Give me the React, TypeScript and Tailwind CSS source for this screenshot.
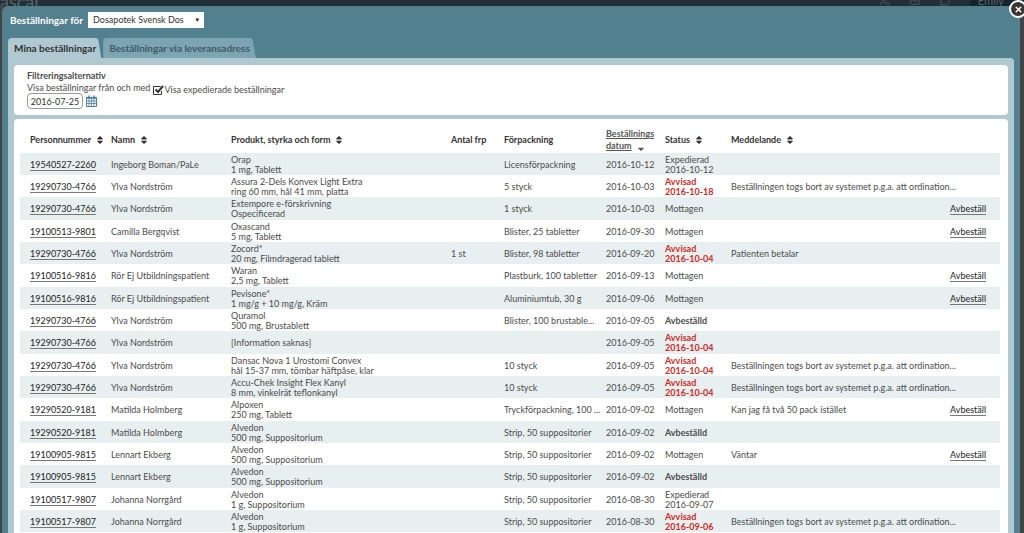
import { FaSort, FaSortDown } from "react-icons/fa";
import { Users, Mail, MessageCircle, X } from "lucide-react";

type Order = {
  pnr: string;
  name: string;
  product: string[];
  count?: string;
  pack?: string;
  date: string;
  status: string;
  statusDate?: string;
  message?: string;
  cancel?: boolean;
};

const REMOVED = "Beställningen togs bort av systemet p.g.a. att ordination...";

const orders: Order[] = [
  { pnr: "19540527-2260", name: "Ingeborg Boman/PaLe", product: ["Orap", "1 mg, Tablett"], pack: "Licensförpackning", date: "2016-10-12", status: "Expedierad", statusDate: "2016-10-12" },
  { pnr: "19290730-4766", name: "Ylva Nordström", product: ["Assura 2-Dels Konvex Light Extra", "ring 60 mm, hål 41 mm, platta"], pack: "5 styck", date: "2016-10-03", status: "Avvisad", statusDate: "2016-10-18", message: REMOVED },
  { pnr: "19290730-4766", name: "Ylva Nordström", product: ["Extempore e-förskrivning", "Ospecificerad"], pack: "1 styck", date: "2016-10-03", status: "Mottagen", cancel: true },
  { pnr: "19100513-9801", name: "Camilla Bergqvist", product: ["Oxascand", "5 mg, Tablett"], pack: "Blister, 25 tabletter", date: "2016-09-30", status: "Mottagen", cancel: true },
  { pnr: "19290730-4766", name: "Ylva Nordström", product: ["Zocord*", "20 mg, Filmdragerad tablett"], count: "1 st", pack: "Blister, 98 tabletter", date: "2016-09-20", status: "Avvisad", statusDate: "2016-10-04", message: "Patienten betalar" },
  { pnr: "19100516-9816", name: "Rör Ej Utbildningspatient", product: ["Waran", "2,5 mg, Tablett"], pack: "Plastburk, 100 tabletter", date: "2016-09-13", status: "Mottagen", cancel: true },
  { pnr: "19100516-9816", name: "Rör Ej Utbildningspatient", product: ["Pevisone*", "1 mg/g + 10 mg/g, Kräm"], pack: "Aluminiumtub, 30 g", date: "2016-09-06", status: "Mottagen", cancel: true },
  { pnr: "19290730-4766", name: "Ylva Nordström", product: ["Quramol", "500 mg, Brustablett"], pack: "Blister, 100 brustable...", date: "2016-09-05", status: "Avbeställd" },
  { pnr: "19290730-4766", name: "Ylva Nordström", product: ["[Information saknas]"], date: "2016-09-05", status: "Avvisad", statusDate: "2016-10-04" },
  { pnr: "19290730-4766", name: "Ylva Nordström", product: ["Dansac Nova 1 Urostomi Convex", "hål 15-37 mm, tömbar häftpåse, klar"], pack: "10 styck", date: "2016-09-05", status: "Avvisad", statusDate: "2016-10-04", message: REMOVED },
  { pnr: "19290730-4766", name: "Ylva Nordström", product: ["Accu-Chek Insight Flex Kanyl", "8 mm, vinkelrät teflonkanyl"], pack: "10 styck", date: "2016-09-05", status: "Avvisad", statusDate: "2016-10-04", message: REMOVED },
  { pnr: "19290520-9181", name: "Matilda Holmberg", product: ["Alpoxen", "250 mg, Tablett"], pack: "Tryckförpackning, 100 ...", date: "2016-09-02", status: "Mottagen", message: "Kan jag få två 50 pack istället", cancel: true },
  { pnr: "19290520-9181", name: "Matilda Holmberg", product: ["Alvedon", "500 mg, Suppositorium"], pack: "Strip, 50 suppositorier", date: "2016-09-02", status: "Avbeställd" },
  { pnr: "19100905-9815", name: "Lennart Ekberg", product: ["Alvedon", "500 mg, Suppositorium"], pack: "Strip, 50 suppositorier", date: "2016-09-02", status: "Mottagen", message: "Väntar", cancel: true },
  { pnr: "19100905-9815", name: "Lennart Ekberg", product: ["Alvedon", "500 mg, Suppositorium"], pack: "Strip, 50 suppositorier", date: "2016-09-02", status: "Avbeställd" },
  { pnr: "19100517-9807", name: "Johanna Norrgård", product: ["Alvedon", "1 g, Suppositorium"], pack: "Strip, 50 suppositorier", date: "2016-08-30", status: "Expedierad", statusDate: "2016-09-07" },
  { pnr: "19100517-9807", name: "Johanna Norrgård", product: ["Alvedon", "1 g, Suppositorium"], pack: "Strip, 50 suppositorier", date: "2016-08-30", status: "Avvisad", statusDate: "2016-09-06", message: REMOVED },
];

const statusStyle: Record<string, string> = {
  Avvisad: "font-bold text-[#cf2a27]",
  Avbeställd: "font-bold",
};

function SortHeader({ label }: { label: string }) {
  return (
    <th className="pt-1 pl-[10px]">
      <button className="flex items-center gap-1 whitespace-nowrap font-bold">
        {label}
        <FaSort className="size-[10px]" />
      </button>
    </th>
  );
}

function CalendarIcon() {
  return (
    <svg viewBox="0 0 11 12" className="h-3 w-[11px]" fill="none" stroke="#4a7ba0">
      <path d="M.5 2.5h10v9H.5z" fill="#fff" />
      <path d="M.5 3.5h10M.5 6h10M.5 8.5h10M3 4v7.5M5.5 4v7.5M8 4v7.5" strokeWidth=".8" />
      <path d="M3 .5v2.5M8 .5v2.5" strokeWidth="1.4" />
    </svg>
  );
}

function OrderRow({ order }: { order: Order }) {
  return (
    <tr className="h-[22px] odd:bg-[#e7eff0] nth-[3n]:h-[23px] [&>td]:pt-px [&>td]:pl-[10px]">
      <td>
        <a href="#" className="border-b border-[#777] text-[#222]">{order.pnr}</a>
      </td>
      <td>{order.name}</td>
      <td>
        {order.product.map((line) => (
          <div key={line}>{line}</div>
        ))}
      </td>
      <td>{order.count}</td>
      <td>{order.pack}</td>
      <td>{order.date}</td>
      <td className={statusStyle[order.status]}>
        <div>{order.status}</div>
        {order.statusDate && <div>{order.statusDate}</div>}
      </td>
      <td>{order.message}</td>
      <td>
        {order.cancel && <a href="#" className="border-b border-[#777] text-[#222]">Avbeställ</a>}
      </td>
    </tr>
  );
}

export default function App() {
  return (
    <div className="relative flex h-screen flex-col overflow-hidden bg-[#444] pr-1 pl-[2px] font-['Lato',sans-serif] text-[9px] leading-[10px] whitespace-nowrap text-[#4c4c4c]">
      {/* Sidhuvudet bakom dialogen */}
      <header className="-mr-1 -ml-[2px] flex h-[6px] shrink-0 items-end justify-between overflow-hidden bg-[#222f36] text-[#56636a]">
        <span className="text-[18px] leading-[10px]">ascal</span>
        <div className="flex items-end gap-5">
          <Users size={10} />
          <Mail size={10} />
          <MessageCircle size={10} />
          <span className="bg-[#15232a] pr-5 pl-2 text-[11px]">Emily</span>
        </div>
      </header>

      <button aria-label="Stäng" className="absolute top-0 right-[-3px] z-10 flex size-[18px] items-center justify-center rounded-full border-2 border-white bg-[#3b3634] text-white">
        <X size={9} strokeWidth={4} />
      </button>

      <main className="flex grow flex-col rounded-t-md bg-[#52808f] px-[6px]">
        <div className="flex h-8 items-center gap-[5px] px-[2px] pb-1">
          <label htmlFor="pharmacy" className="text-[10px] font-bold text-white">Beställningar för</label>
          <div className="relative">
            <select id="pharmacy" className="block h-4 w-[116px] appearance-none bg-white pl-[5px] text-[#333]">
              <option>Dosapotek Svensk Dos</option>
            </select>
            <span className="pointer-events-none absolute top-[3px] right-1 text-[6px] text-[#222]">▼</span>
          </div>
        </div>

        <nav className="flex h-5 shrink-0 gap-[2px] text-[10px] font-bold">
          <button className="rounded-tl bg-[#b0c8d0] pr-[5px] pl-[6px] text-[#333] [clip-path:polygon(0_0,95%_0,97%_10%,100%_100%,0_100%)]">Mina beställningar</button>
          <button className="rounded-tl bg-[#7ca4b2] px-[6px] text-[#3f5a66] [clip-path:polygon(0_0,97%_0,98%_10%,100%_100%,0_100%)]">Beställningar via leveransadress</button>
        </nav>

        <div className="flex grow flex-col gap-1 rounded-tr bg-[#b0c8d0] px-[6px] pt-[7px]">
          <section className="h-[50px] rounded bg-white px-[13px] pt-[5px]">
            <h2 className="font-bold leading-[12px]">Filtreringsalternativ</h2>
            <div className="flex gap-[2px]">
              <div>
                <label htmlFor="from" className="block leading-[11px]">Visa beställningar från och med</label>
                <div className="flex items-center gap-[3px]">
                  <input id="from" defaultValue="2016-07-25" className="h-4 w-14 rounded-sm border border-[#999] px-[2px] text-center text-[#333]" />
                  <button aria-label="Välj datum"><CalendarIcon /></button>
                </div>
              </div>
              <label className="flex h-4 items-center">
                <input type="checkbox" defaultChecked className="peer sr-only" />
                <svg viewBox="0 0 12 12" className="size-3" fill="none" stroke="#333">
                  <path d="M9.5 7v3.5h-8v-8h7" />
                  <path d="M3.5 5.5 6 8l5-6" strokeWidth="2" />
                </svg>
                Visa expedierade beställningar
              </label>
            </div>
          </section>

          <section className="grow rounded-t bg-white pt-1 pr-2 pl-[6px]">
            <table className="w-full table-fixed text-left">
              <colgroup>
                <col className="w-[81px]" />
                <col className="w-[120px]" />
                <col className="w-[220px]" />
                <col className="w-[53px]" />
                <col className="w-[102px]" />
                <col className="w-[59px]" />
                <col className="w-[66px]" />
                <col />
                <col className="w-[60px]" />
              </colgroup>
              <thead className="text-[#333]">
                <tr className="h-[30px]">
                  <SortHeader label="Personnummer" />
                  <SortHeader label="Namn" />
                  <SortHeader label="Produkt, styrka och form" />
                  <th className="pt-1 pl-[10px]">Antal frp</th>
                  <th className="pt-1 pl-[10px]">Förpackning</th>
                  <th className="pt-1 pl-[10px]">
                    <button className="text-left font-bold leading-[12px] text-[#555]">
                      <span className="underline">Beställnings<br />datum</span>
                      <FaSortDown className="ml-1 inline size-[10px]" />
                    </button>
                  </th>
                  <SortHeader label="Status" />
                  <SortHeader label="Meddelande" />
                  <th></th>
                </tr>
              </thead>
              <tbody>
                {orders.map((order, i) => (
                  <OrderRow key={i} order={order} />
                ))}
              </tbody>
            </table>
          </section>
        </div>
      </main>
    </div>
  );
}
